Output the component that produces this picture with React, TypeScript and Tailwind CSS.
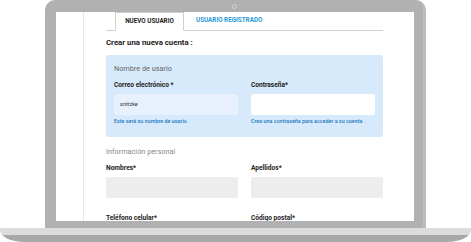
import React from 'react';

const font = { fontFamily: 'Roboto, "Liberation Sans", sans-serif' };

const Field: React.FC<{ label: string; bg: string; value?: string; help?: string }> = ({ label, bg, value, help }) => (
  <div className="flex flex-col">
    <div className="h-[11px] flex items-center text-[6.6px] font-bold text-[#222]">{label}</div>
    <div className={`mt-[3px] h-[21px] rounded-[2px] flex items-center px-[6px] text-[5.6px] text-[#333] ${bg}`}>
      {value}
    </div>
    {help && <div className="mt-[2px] h-[8px] flex items-center text-[5.4px] font-medium text-[#1b78c0] whitespace-nowrap">{help}</div>}
  </div>
);

const App: React.FC = () => {
  return (
    <div className="w-[471px] h-[242px] bg-white overflow-hidden flex flex-col" style={font}>
      {/* lid */}
      <div className="mx-[45px] w-[381px] h-[228px] rounded-t-[10px] bg-[#b1b1b1] border-r-[3px] border-[#bcbcbc] pt-[12px] pl-[11px] pr-[9px] pb-[7px] relative">
        <div className="absolute left-[187px] top-[4px] w-[5px] h-[5px] rounded-full border border-[#d2d2d2]" />
        <div className="w-full h-full bg-white overflow-hidden flex">
          <div className="w-[28px] shrink-0 border-r border-[#e6e6e6]" />
          <div className="pl-[22px] w-[299px] shrink-0">
            {/* tabs */}
            <div className="h-[19px] flex border-b border-[#cfcfcf] pl-[9px]">
              <div className="w-[69px] h-[19px] border border-[#cfcfcf] border-b-white bg-white flex items-center justify-center text-[6.3px] font-bold text-[#222]">
                NUEVO USUARIO
              </div>
              <div className="pl-[12px] flex items-center text-[6.3px] font-bold text-[#1e9ad6]">USUARIO REGISTRADO</div>
            </div>
            <div className="h-[24px] flex items-center text-[7.8px] font-bold text-[#222]">Crear una nueva cuenta :</div>
            {/* username box */}
            <div className="bg-[#d7eafb] rounded-[2px] px-[8px] pt-[8px] pb-[12px]">
              <div className="h-[12px] flex items-center text-[7.3px] text-[#666]">Nombre de usario</div>
              <div className="mt-[5px] grid grid-cols-2 gap-x-[13px]">
                <Field label="Correo electrónico *" bg="bg-[#e8f0fe]" value="snitzke" help="Este será su nombre de usario" />
                <Field label="Contraseña*" bg="bg-white" help="Crea una contraseña para acceder a su cuenta" />
              </div>
            </div>
            {/* personal */}
            <div className="mt-[9px] h-[12px] flex items-center text-[7.3px] text-[#888]">Información personal</div>
            <div className="mt-[5px] grid grid-cols-2 gap-x-[13px] gap-y-[15px]">
              <Field label="Nombres*" bg="bg-[#ededed]" />
              <Field label="Apellidos*" bg="bg-[#ededed]" />
              <Field label="Teléfono celular*" bg="bg-[#ededed]" />
              <Field label="Código postal*" bg="bg-[#ededed]" />
            </div>
          </div>
        </div>
      </div>
      {/* base */}
      <div className="w-full h-[14px] flex flex-col rounded-br-[24px_12px] rounded-bl-[24px_12px] overflow-hidden">
        <div className="h-[7px] bg-[#dcdcdc]" />
        <div className="h-[7px] bg-[#a9a9a9]" />
      </div>
    </div>
  );
};

export default App;
